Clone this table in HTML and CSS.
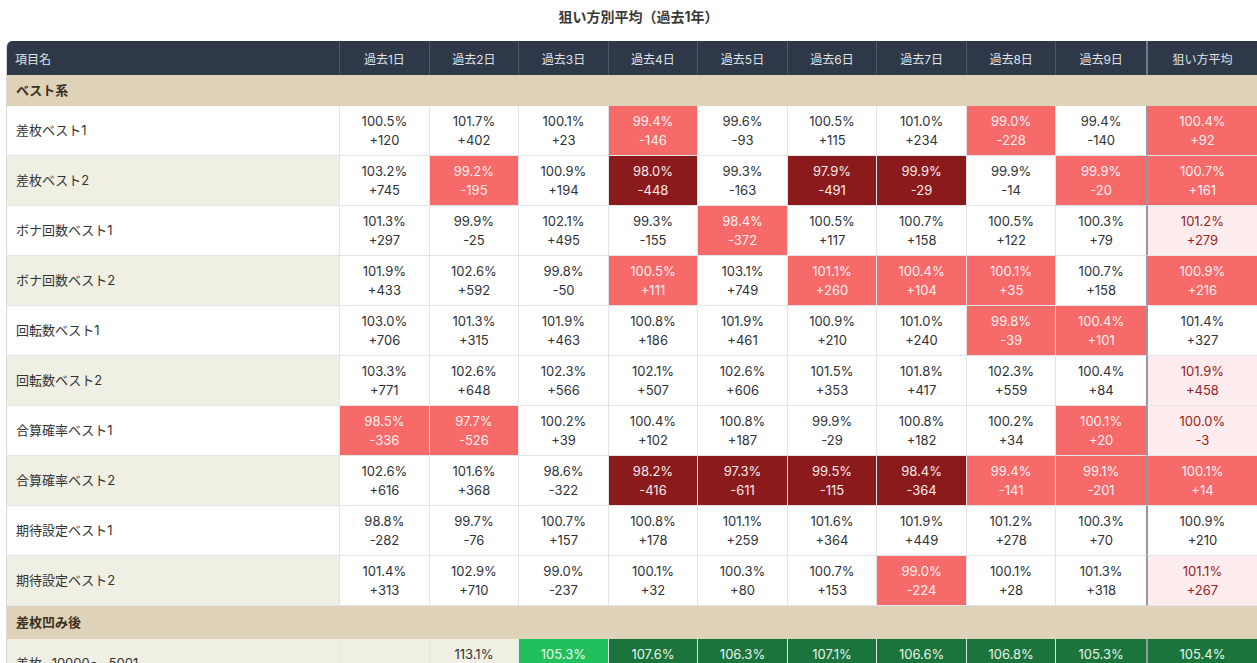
FILE: index.html
```html
<!DOCTYPE html>
<html lang="ja">
<head>
<meta charset="utf-8">
<title>狙い方別平均（過去1年）</title>
<link rel="stylesheet" href="styles.css">
</head>
<body>
<div class="page">
  <h1 class="title">狙い方別平均（過去1年）</h1>
  <div class="table-wrap">
    <table class="avg-table">
      <colgroup>
        <col class="col-name">
        <col class="col-day"><col class="col-day"><col class="col-day"><col class="col-day"><col class="col-day"><col class="col-day"><col class="col-day"><col class="col-day"><col class="col-day">
        <col class="col-avg">
      </colgroup>
      <thead>
        <tr>
          <th class="th-name">項目名</th>
          <th>過去1日</th><th>過去2日</th><th>過去3日</th><th>過去4日</th><th>過去5日</th><th>過去6日</th><th>過去7日</th><th>過去8日</th><th class="last-day">過去9日</th>
          <th class="avg">狙い方平均</th>
        </tr>
      </thead>
      <tbody>
        <tr class="section"><td colspan="11">ベスト系</td></tr>

        <tr>
          <td class="name">差枚ベスト1</td>
          <td><span>100.5%</span><span>+120</span></td>
          <td><span>101.7%</span><span>+402</span></td>
          <td><span>100.1%</span><span>+23</span></td>
          <td class="red"><span>99.4%</span><span>-146</span></td>
          <td><span>99.6%</span><span>-93</span></td>
          <td><span>100.5%</span><span>+115</span></td>
          <td><span>101.0%</span><span>+234</span></td>
          <td class="red"><span>99.0%</span><span>-228</span></td>
          <td class="last-day"><span>99.4%</span><span>-140</span></td>
          <td class="avg red"><span>100.4%</span><span>+92</span></td>
        </tr>
        <tr class="alt">
          <td class="name">差枚ベスト2</td>
          <td><span>103.2%</span><span>+745</span></td>
          <td class="red"><span>99.2%</span><span>-195</span></td>
          <td><span>100.9%</span><span>+194</span></td>
          <td class="dark"><span>98.0%</span><span>-448</span></td>
          <td><span>99.3%</span><span>-163</span></td>
          <td class="dark"><span>97.9%</span><span>-491</span></td>
          <td class="dark"><span>99.9%</span><span>-29</span></td>
          <td><span>99.9%</span><span>-14</span></td>
          <td class="last-day red"><span>99.9%</span><span>-20</span></td>
          <td class="avg red"><span>100.7%</span><span>+161</span></td>
        </tr>
        <tr>
          <td class="name">ボナ回数ベスト1</td>
          <td><span>101.3%</span><span>+297</span></td>
          <td><span>99.9%</span><span>-25</span></td>
          <td><span>102.1%</span><span>+495</span></td>
          <td><span>99.3%</span><span>-155</span></td>
          <td class="red"><span>98.4%</span><span>-372</span></td>
          <td><span>100.5%</span><span>+117</span></td>
          <td><span>100.7%</span><span>+158</span></td>
          <td><span>100.5%</span><span>+122</span></td>
          <td class="last-day"><span>100.3%</span><span>+79</span></td>
          <td class="avg pink"><span>101.2%</span><span>+279</span></td>
        </tr>
        <tr class="alt">
          <td class="name">ボナ回数ベスト2</td>
          <td><span>101.9%</span><span>+433</span></td>
          <td><span>102.6%</span><span>+592</span></td>
          <td><span>99.8%</span><span>-50</span></td>
          <td class="red"><span>100.5%</span><span>+111</span></td>
          <td><span>103.1%</span><span>+749</span></td>
          <td class="red"><span>101.1%</span><span>+260</span></td>
          <td class="red"><span>100.4%</span><span>+104</span></td>
          <td class="red"><span>100.1%</span><span>+35</span></td>
          <td class="last-day"><span>100.7%</span><span>+158</span></td>
          <td class="avg red"><span>100.9%</span><span>+216</span></td>
        </tr>
        <tr>
          <td class="name">回転数ベスト1</td>
          <td><span>103.0%</span><span>+706</span></td>
          <td><span>101.3%</span><span>+315</span></td>
          <td><span>101.9%</span><span>+463</span></td>
          <td><span>100.8%</span><span>+186</span></td>
          <td><span>101.9%</span><span>+461</span></td>
          <td><span>100.9%</span><span>+210</span></td>
          <td><span>101.0%</span><span>+240</span></td>
          <td class="red"><span>99.8%</span><span>-39</span></td>
          <td class="last-day red"><span>100.4%</span><span>+101</span></td>
          <td class="avg"><span>101.4%</span><span>+327</span></td>
        </tr>
        <tr class="alt">
          <td class="name">回転数ベスト2</td>
          <td><span>103.3%</span><span>+771</span></td>
          <td><span>102.6%</span><span>+648</span></td>
          <td><span>102.3%</span><span>+566</span></td>
          <td><span>102.1%</span><span>+507</span></td>
          <td><span>102.6%</span><span>+606</span></td>
          <td><span>101.5%</span><span>+353</span></td>
          <td><span>101.8%</span><span>+417</span></td>
          <td><span>102.3%</span><span>+559</span></td>
          <td class="last-day"><span>100.4%</span><span>+84</span></td>
          <td class="avg pink"><span>101.9%</span><span>+458</span></td>
        </tr>
        <tr>
          <td class="name">合算確率ベスト1</td>
          <td class="red"><span>98.5%</span><span>-336</span></td>
          <td class="red"><span>97.7%</span><span>-526</span></td>
          <td><span>100.2%</span><span>+39</span></td>
          <td><span>100.4%</span><span>+102</span></td>
          <td><span>100.8%</span><span>+187</span></td>
          <td><span>99.9%</span><span>-29</span></td>
          <td><span>100.8%</span><span>+182</span></td>
          <td><span>100.2%</span><span>+34</span></td>
          <td class="last-day red"><span>100.1%</span><span>+20</span></td>
          <td class="avg pink"><span>100.0%</span><span>-3</span></td>
        </tr>
        <tr class="alt">
          <td class="name">合算確率ベスト2</td>
          <td><span>102.6%</span><span>+616</span></td>
          <td><span>101.6%</span><span>+368</span></td>
          <td><span>98.6%</span><span>-322</span></td>
          <td class="dark"><span>98.2%</span><span>-416</span></td>
          <td class="dark"><span>97.3%</span><span>-611</span></td>
          <td class="dark"><span>99.5%</span><span>-115</span></td>
          <td class="dark"><span>98.4%</span><span>-364</span></td>
          <td class="red"><span>99.4%</span><span>-141</span></td>
          <td class="last-day red"><span>99.1%</span><span>-201</span></td>
          <td class="avg red"><span>100.1%</span><span>+14</span></td>
        </tr>
        <tr>
          <td class="name">期待設定ベスト1</td>
          <td><span>98.8%</span><span>-282</span></td>
          <td><span>99.7%</span><span>-76</span></td>
          <td><span>100.7%</span><span>+157</span></td>
          <td><span>100.8%</span><span>+178</span></td>
          <td><span>101.1%</span><span>+259</span></td>
          <td><span>101.6%</span><span>+364</span></td>
          <td><span>101.9%</span><span>+449</span></td>
          <td><span>101.2%</span><span>+278</span></td>
          <td class="last-day"><span>100.3%</span><span>+70</span></td>
          <td class="avg"><span>100.9%</span><span>+210</span></td>
        </tr>
        <tr class="alt">
          <td class="name">期待設定ベスト2</td>
          <td><span>101.4%</span><span>+313</span></td>
          <td><span>102.9%</span><span>+710</span></td>
          <td><span>99.0%</span><span>-237</span></td>
          <td><span>100.1%</span><span>+32</span></td>
          <td><span>100.3%</span><span>+80</span></td>
          <td><span>100.7%</span><span>+153</span></td>
          <td class="red"><span>99.0%</span><span>-224</span></td>
          <td><span>100.1%</span><span>+28</span></td>
          <td class="last-day"><span>101.3%</span><span>+318</span></td>
          <td class="avg pink"><span>101.1%</span><span>+267</span></td>
        </tr>

        <tr class="section section-next"><td colspan="11">差枚凹み後</td></tr>

        <tr class="alt">
          <td class="name">差枚 -10000～-5001</td>
          <td class="beige"></td>
          <td class="beige"><span>113.1%</span><span>+1,942</span></td>
          <td class="green"><span>105.3%</span><span>+1,169</span></td>
          <td class="dgreen"><span>107.6%</span><span>+1,688</span></td>
          <td class="dgreen"><span>106.3%</span><span>+1,391</span></td>
          <td class="dgreen"><span>107.1%</span><span>+1,572</span></td>
          <td class="dgreen"><span>106.6%</span><span>+1,452</span></td>
          <td class="dgreen"><span>106.8%</span><span>+1,503</span></td>
          <td class="last-day dgreen"><span>105.3%</span><span>+1,168</span></td>
          <td class="avg dgreen"><span>105.4%</span><span>+1,190</span></td>
        </tr>
      </tbody>
    </table>
  </div>
</div>
</body>
</html>
```

FILE: styles.css
```css
html, body {
  margin: 0;
  padding: 0;
  background: #ffffff;
  overflow: hidden;
}

body {
  font-family: Inter, "Noto Sans CJK JP", "Noto Sans", sans-serif;
  color: #2f3237;
}

.page {
  width: 1265px;
  padding: 7px 0 0 6px;
}

.title {
  margin: 0 0 14px;
  height: 20px;
  line-height: 20px;
  text-align: center;
  font-size: 14px;
  font-weight: 700;
  color: #3b3936;
}

.table-wrap {
  width: 1251px;
  border-top-left-radius: 6px;
  overflow: hidden;
  border-left: 1px solid #d6d8de;
}

.avg-table {
  width: 1250px;
  table-layout: fixed;
  border-collapse: separate;
  border-spacing: 0;
  font-size: 13px;
}

.col-name { width: 333px; }
.col-day { width: 89.5px; }
.col-avg { width: 111px; }

.avg-table th {
  height: 34px;
  padding: 0;
  background: #2f3848;
  color: #dfe3ea;
  font-size: 12px;
  font-weight: 400;
  text-align: center;
  border-right: 1px solid #4d5566;
}

.avg-table th.th-name {
  text-align: left;
  padding-left: 8px;
}

.avg-table th.last-day {
  border-right: none;
}

.avg-table th.avg {
  border-left: 2px solid #737b89;
  border-right: none;
}

.avg-table td {
  height: 49px;
  padding: 0;
  text-align: center;
  line-height: 19px;
  background: #ffffff;
  border-right: 1px solid #e3e3ea;
  border-bottom: 1px solid #e3e3ea;
}

.avg-table td span {
  display: block;
}

.avg-table td.name {
  text-align: left;
  padding-left: 9px;
  font-size: 13px;
  color: #333333;
}

.avg-table tr.alt td.name {
  background: #f0efe4;
}

.avg-table td.last-day {
  border-right: none;
}

.avg-table td.avg {
  border-left: 2px solid #9299a5;
  border-right: none;
}

.avg-table tr.section td {
  height: 30px;
  padding: 0 0 0 9px;
  text-align: left;
  background: #ded3b9;
  color: #3a2f20;
  font-weight: 700;
  font-size: 13px;
  border: none;
  border-bottom: 1px solid #ded3b9;
}

.avg-table tr.section-next td {
  height: 32px;
}

.avg-table td.red {
  background: #f76a6a;
  color: #fff1f1;
}

.avg-table td.dark {
  background: #8a1a1c;
  color: #fbeaea;
}

.avg-table td.pink {
  background: #fdeced;
  color: #9b1d20;
}

.avg-table td.green {
  background: #22c05c;
  color: #eafbef;
}

.avg-table td.dgreen {
  background: #1b743b;
  color: #e6f4ea;
}

.avg-table td.beige {
  background: #f0efe4;
}
```
